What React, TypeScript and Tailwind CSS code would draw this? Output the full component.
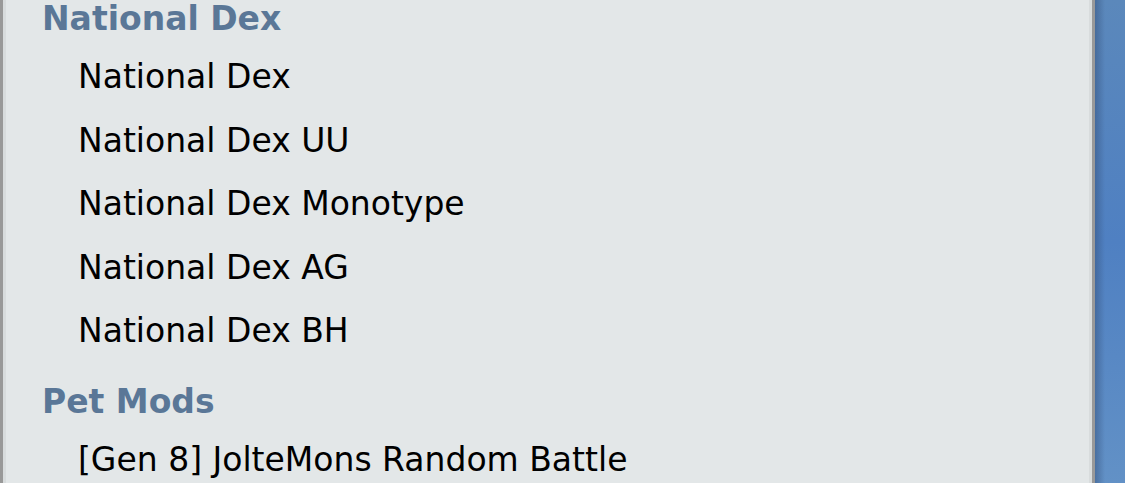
import React from 'react';

interface Section {
  title: string;
  formats: string[];
}

const sections: Section[] = [
  {
    title: 'National Dex',
    formats: ['National Dex', 'National Dex UU', 'National Dex Monotype', 'National Dex AG', 'National Dex BH'],
  },
  {
    title: 'Pet Mods',
    formats: ['[Gen 8] JolteMons Random Battle'],
  },
];

const FormatList: React.FC = () => {
  return (
    <div className="flex flex-col">
      {sections.map((section, i) => (
        <div key={section.title} className={i > 0 ? 'mt-[20px]' : ''}>
          <h3 className="pl-[36px] h-[38px] leading-[38px] mb-[7px] text-[33px] font-bold text-[#5a7797]">
            {section.title}
          </h3>
          <ul>
            {section.formats.map(format => (
              <li key={format} className="pl-[72px] h-[63.5px] leading-[63px] text-[33px] text-black whitespace-nowrap">
                {format}
              </li>
            ))}
          </ul>
        </div>
      ))}
    </div>
  );
};

export default function App() {
  return (
    <div
      className="flex h-[483px] w-[1125px] overflow-hidden"
      style={{ fontFamily: '"DejaVu Sans", Verdana, sans-serif' }}
    >
      <div className="flex-none w-[1095px] h-full bg-[#e3e7e8] border-l-[3px] border-l-[#999999] border-r-[3px] border-r-[#999999] overflow-hidden">
        <div className="h-full border-l-[3px] border-l-[#d8dcdd] border-r-[3px] border-r-[#d8dcdd] overflow-hidden">
          <FormatList />
        </div>
      </div>
      <div className="relative flex-1 h-full bg-gradient-to-b from-[#5b88bb] via-[#4f80c2] to-[#6291c6]">
        <div className="absolute inset-y-0 left-0 w-[10px] bg-gradient-to-r from-[#34507a]/50 to-transparent" />
      </div>
    </div>
  );
}
